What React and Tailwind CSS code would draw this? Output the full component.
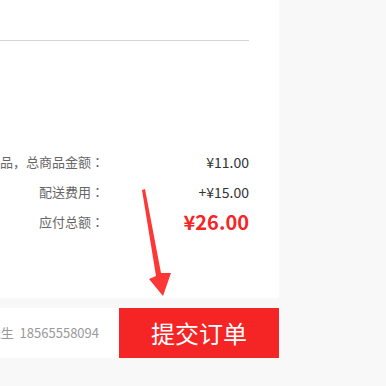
import React from 'react';

const font = { fontFamily: '"Noto Sans CJK SC", "Liberation Sans", sans-serif' };

function Row({ label, children }) {
  return (
    <div className="flex items-center h-[30px] whitespace-nowrap">
      <div className="w-[104px] flex justify-end text-[13px] text-[#666]">
        {label}
        <span className="[font-family:'Noto_Sans_CJK_JP',sans-serif]">：</span>
      </div>
      <div className="flex-1 flex justify-end">{children}</div>
    </div>
  );
}

export default function App() {
  return (
    <div className="relative w-[386px] h-[386px] bg-[#f8f8f8] overflow-hidden" style={font}>
      {/* order summary panel */}
      <div className="w-[279px] h-[298px] bg-white pr-[30px] overflow-hidden">
        <div className="h-[41px] border-b border-[#d4d4d4]" />
        <div className="mt-[106px]">
          <Row label="共1件商品，总商品金额">
            <span className="text-[14px] text-[#333]">¥11.00</span>
          </Row>
          <Row label="配送费用">
            <span className="text-[14px] text-[#333]">+¥15.00</span>
          </Row>
          <Row label="应付总额">
            <span className="text-[20px] font-bold text-[#f52525]">¥26.00</span>
          </Row>
        </div>
      </div>

      {/* bottom bar */}
      <div className="mt-[10px] flex h-[50px] w-[279px]">
        <div className="w-[119px] bg-white flex items-center justify-end pr-[20px] overflow-hidden whitespace-nowrap text-[13px] text-[#999]">
          收货人：张先生&nbsp;&nbsp;18565558094
        </div>
        <button className="flex-1 bg-[#f52525] text-white text-[24px] flex items-center justify-center">
          提交订单
        </button>
      </div>

      {/* annotation arrow */}
      <svg className="absolute left-0 top-0 pointer-events-none" width="386" height="386" viewBox="0 0 386 386">
        <polygon
          points="142,190 145,189 161,273 171,273 163,296 149,279 156,276"
          fill="#ff3636"
        />
      </svg>
    </div>
  );
}
